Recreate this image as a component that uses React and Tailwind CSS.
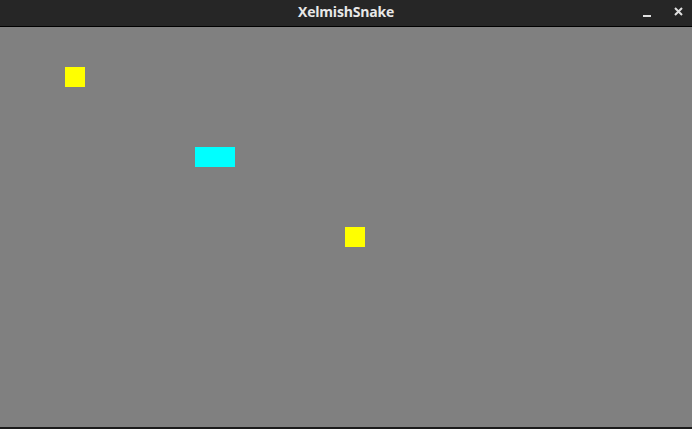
const cells = [
  { x: 65, y: 40, w: 20, color: 'bg-[#ffff00]' },
  { x: 195, y: 120, w: 40, color: 'bg-[#00ffff]' },
  { x: 345, y: 200, w: 20, color: 'bg-[#ffff00]' },
];

const App = () => {
  return (
    <div className="w-[692px] h-[429px] flex flex-col bg-[#1b1b1b] overflow-hidden">
      <div className="relative h-[27px] shrink-0 flex items-center justify-center bg-[#262626] border-b border-black">
        <span className="text-[14px] font-bold text-[#e8e8e8] font-['Open_Sans',sans-serif] leading-none -mt-[2px] tracking-[-0.2px]">
          XelmishSnake
        </span>
        <div className="absolute right-[9px] top-0 h-[26px] flex items-center gap-[23px]">
          <span className="w-[8px] h-[2px] bg-[#e0e0e0] mt-[5px]" />
          <svg width="9" height="9" viewBox="0 0 9 9" className="-mt-[3px]">
            <path d="M1 1 L8 8 M8 1 L1 8" stroke="#e0e0e0" strokeWidth="2" />
          </svg>
        </div>
      </div>
      <div className="relative h-[400px] shrink-0 bg-[#808080]">
        {cells.map((c, i) => (
          <div
            key={i}
            className={`absolute h-[20px] ${c.color}`}
            style={{ left: c.x, top: c.y, width: c.w }}
          />
        ))}
      </div>
    </div>
  );
};

export default App;
